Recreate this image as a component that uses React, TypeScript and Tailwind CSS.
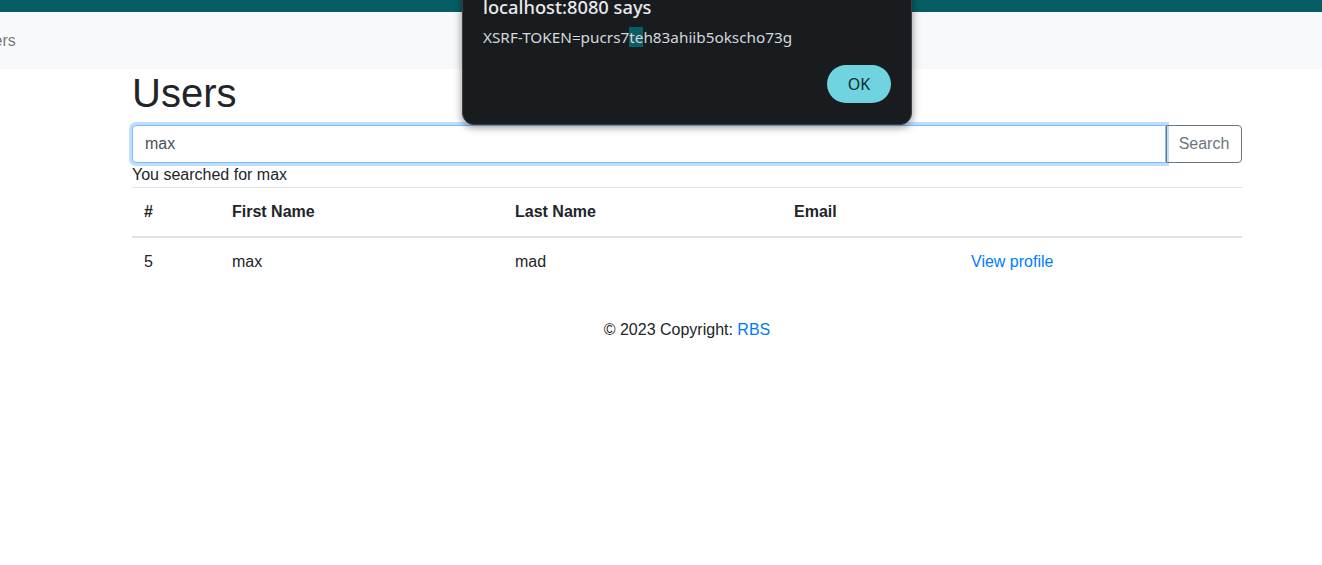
import React from "react";

const ROWS = [{ id: 5, first: "max", last: "mad", email: "" }];

function AlertDialog() {
  return (
    <div className="absolute left-[462px] top-[-20px] w-[450px] h-[145px] rounded-[12px] bg-[#181c1f] border border-[#3a3f43] shadow-[0_2px_8px_rgba(0,0,0,0.45)] px-[20px] font-['Noto_Sans',sans-serif]">
      <p className="mt-[14px] text-[18.3px] leading-[24px] font-medium text-[#e8eaed]">localhost:8080 says</p>
      <p className="mt-[8px] text-[15.3px] leading-[20px] text-[#d5d7da]">
        XSRF-TOKEN=pucrs7<span className="bg-[#0b5c63]">te</span>h83ahiib5okscho73g
      </p>
      <div className="mt-[18px] flex justify-end">
        <button
          type="button"
          className="h-[38px] w-[64px] rounded-full bg-[#6fd3e0] text-[16px] text-[#0e2a30]"
        >
          OK
        </button>
      </div>
    </div>
  );
}

export default function App() {
  return (
    <div className="relative min-h-[565px] bg-white overflow-hidden font-['Liberation_Sans',Arial,sans-serif] text-[#212529] text-[16px]">
      <div className="h-[12px] bg-[#075d64]" />
      <nav className="h-[57px] bg-[#f8f9fa] flex items-center">
        <span className="ml-[-26px] text-[rgba(0,0,0,0.55)]">Users</span>
      </nav>

      <main className="ml-[132px] w-[1110px]">
        <h1 className="text-[40px] leading-[48px] font-medium mb-[8px]">Users</h1>
        <div className="flex">
          <input
            readOnly
            value="max"
            className="flex-1 h-[38px] px-[12px] text-[#495057] border border-[#80bdff] rounded-l-[4px] shadow-[0_0_0_3px_rgba(0,123,255,0.25)] outline-none bg-white"
          />
          <button
            type="button"
            className="h-[38px] w-[76px] border border-[#6c757d] rounded-r-[4px] text-[#6c757d]"
          >
            Search
          </button>
        </div>
        <p className="leading-[24px]">You searched for max</p>

        <table className="w-full border-collapse text-left">
          <thead>
            <tr className="border-t border-[#dee2e6] border-b-2">
              <th className="w-[88px] px-[12px] py-[12px] leading-[24px] font-bold">#</th>
              <th className="w-[283px] px-[12px] py-[12px] leading-[24px] font-bold">First Name</th>
              <th className="w-[279px] px-[12px] py-[12px] leading-[24px] font-bold">Last Name</th>
              <th className="w-[177px] px-[12px] py-[12px] leading-[24px] font-bold">Email</th>
              <th className="px-[12px] py-[12px]" />
            </tr>
          </thead>
          <tbody>
            {ROWS.map((row) => (
              <tr key={row.id}>
                <td className="px-[12px] py-[12px] leading-[24px]">{row.id}</td>
                <td className="px-[12px] py-[12px] leading-[24px]">{row.first}</td>
                <td className="px-[12px] py-[12px] leading-[24px]">{row.last}</td>
                <td className="px-[12px] py-[12px] leading-[24px]">{row.email}</td>
                <td className="px-[12px] py-[12px] leading-[24px]">
                  <a className="text-[#007bff]">View profile</a>
                </td>
              </tr>
            ))}
          </tbody>
        </table>

        <footer className="mt-[32px] text-center leading-[24px]">
          © 2023 Copyright: <a className="text-[#007bff]">RBS</a>
        </footer>
      </main>

      <AlertDialog />
    </div>
  );
}
